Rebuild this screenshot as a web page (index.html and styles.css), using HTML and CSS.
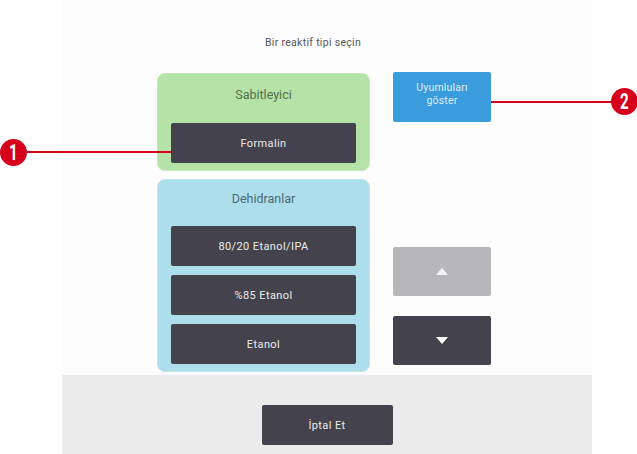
FILE: index.html
```html
<!DOCTYPE html>
<html lang="tr">
<head>
    <meta charset="UTF-8">
    <meta name="viewport" content="width=device-width, initial-scale=1.0">
    <title>Reaktif tipi</title>
    <link rel="stylesheet" href="styles.css">
</head>
<body>
    <!-- screen area -->
    <div class="screen">
        <div class="content">
            <p class="title">Bir reaktif tipi seçin</p>

            <div class="columns">
                <!-- reagent groups -->
                <div class="groups">
                    <div class="panel panel-green">
                        <h3 class="panel-head">Sabitleyici</h3>
                        <button class="btn-dark">Formalin</button>
                    </div>
                    <div class="panel panel-blue">
                        <h3 class="panel-head">Dehidranlar</h3>
                        <button class="btn-dark">80/20 Etanol/IPA</button>
                        <button class="btn-dark">%85 Etanol</button>
                        <button class="btn-dark">Etanol</button>
                    </div>
                </div>

                <!-- side buttons -->
                <div class="side">
                    <button class="btn-blue">Uyumluları<br>göster</button>
                    <button class="btn-arrow btn-up"><span class="tri tri-up"></span></button>
                    <button class="btn-arrow btn-down"><span class="tri tri-down"></span></button>
                </div>
            </div>
        </div>

        <div class="footer">
            <button class="btn-dark btn-cancel">İptal Et</button>
        </div>
    </div>

    <!-- callouts -->
    <div class="callout callout-1">
        <span class="num">1</span>
    </div>
    <div class="line line-1"></div>
    <div class="callout callout-2">
        <span class="num">2</span>
    </div>
    <div class="line line-2"></div>
</body>
</html>
```
FILE: styles.css
```css
/* page */
body {
    margin: 0;
    background-color: #ffffff;
    font-family: Roboto, "Liberation Sans", sans-serif;
    width: 637px;
    height: 454px;
    overflow: hidden;
    position: relative;
}

.screen {
    width: 530px;
    height: 454px;
    margin-left: 62px;
    display: flex;
    flex-direction: column;
    background-color: #fdfdfd;
}

.content {
    height: 375px;
    box-sizing: border-box;
    padding-top: 34px;
}

.title {
    margin: 0;
    text-align: center;
    padding-right: 28px;
    font-size: 10.5px;
    letter-spacing: 0.3px;
    line-height: 18px;
    color: #555555;
}

.columns {
    display: flex;
    gap: 23px;
    padding-left: 95px;
    margin-top: 20px;
}

/* reagent group panels */
.groups {
    width: 213px;
    display: flex;
    flex-direction: column;
    gap: 8px;
    margin-top: 1px;
}

.panel {
    border-radius: 8px;
    padding: 0 13px 7px;
    display: flex;
    flex-direction: column;
    gap: 9px;
}

.panel-green {
    background-color: #b4e2a7;
    border: 1px solid #c4e9b8;
}

.panel-blue {
    background-color: #acdeeb;
    border: 1px solid #bde6f0;
}

.panel-head {
    margin: 0;
    text-align: center;
    font-weight: normal;
    font-size: 12.5px;
    line-height: 20px;
    padding-top: 11px;
    padding-bottom: 9px;
}

.panel-green .panel-head {
    color: #56704d;
}

.panel-blue .panel-head {
    padding-top: 9px;
    padding-bottom: 8px;
    color: #4e6a76;
}

.btn-dark {
    display: block;
    width: 100%;
    height: 40px;
    border: none;
    border-radius: 2px;
    background-color: #43424d;
    color: #ececec;
    font-family: Roboto, "Liberation Sans", sans-serif;
    font-size: 11px;
    letter-spacing: 0.4px;
    padding: 0;
}

/* right column */
.side {
    width: 98px;
    display: flex;
    flex-direction: column;
}

.btn-blue {
    height: 50px;
    border: none;
    border-radius: 2px;
    background-color: #3b9cdd;
    color: #dcecf8;
    font-family: Roboto, "Liberation Sans", sans-serif;
    font-size: 10.5px;
    letter-spacing: 0.2px;
    line-height: 13px;
    padding: 0 0 6px;
}

.btn-arrow {
    height: 49px;
    border: none;
    border-radius: 2px;
    padding: 0;
    display: flex;
    align-items: center;
    justify-content: center;
}

.btn-up {
    margin-top: 125px;
    background-color: #b7b7ba;
}

.btn-down {
    margin-top: 20px;
    background-color: #43424d;
}

.tri {
    width: 0;
    height: 0;
    border-left: 6px solid transparent;
    border-right: 6px solid transparent;
}

.tri-up {
    border-bottom: 7px solid #f4f4f4;
}

.tri-down {
    border-top: 7px solid #ffffff;
}

/* bottom bar */
.footer {
    flex: 1;
    background-color: #ebebeb;
    display: flex;
    justify-content: center;
    padding-top: 30px;
}

.btn-cancel {
    width: 131px;
    height: 40px;
}

/* red callouts over the picture */
.callout {
    position: absolute;
    width: 27px;
    height: 27px;
    border-radius: 50%;
    background-color: #d7001c;
    display: flex;
    align-items: center;
    justify-content: center;
}

.num {
    display: inline-block;
    color: #ffffff;
    font-family: Roboto, "Liberation Sans", sans-serif;
    font-weight: bold;
    font-size: 19px;
    line-height: 1;
    transform: scale(0.8, 1.15);
}

.callout-1 {
    left: 0;
    top: 139px;
}

.callout-2 {
    left: 611px;
    top: 88px;
}

.line {
    position: absolute;
    height: 2px;
    background-color: #d7001c;
}

.line-1 {
    left: 26px;
    top: 151px;
    width: 146px;
}

.line-2 {
    left: 491px;
    top: 101px;
    width: 122px;
}
```
